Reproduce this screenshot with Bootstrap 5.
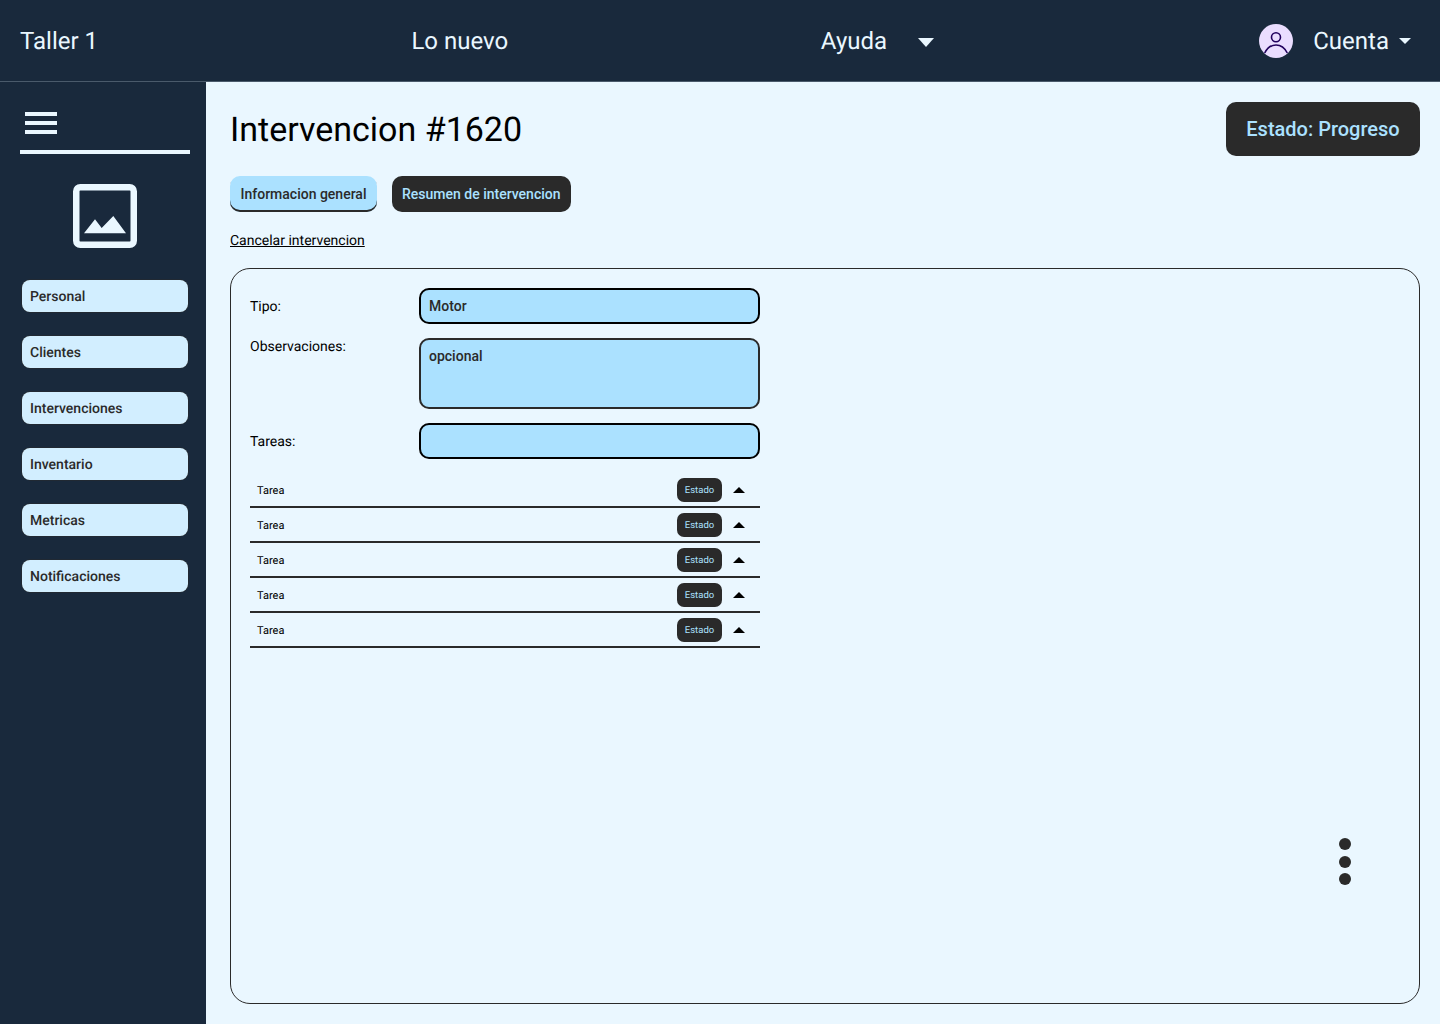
<!DOCTYPE html>
<html lang="es">
<head>
  <meta charset="UTF-8">
  <meta name="viewport" content="width=device-width, initial-scale=1.0">
  <title>Intervencion #1620</title>
  <link href="https://cdn.jsdelivr.net/npm/bootstrap@5.3.1/dist/css/bootstrap.min.css" rel="stylesheet">
  <style>
    body { font-family: Roboto, sans-serif; background: #eaf7ff; color: #000; text-rendering: geometricPrecision; }
    .app-frame { width: 1440px; height: 1024px; overflow: hidden; }

    /* barra superior */
    .top-bar { height: 82px; background: #19293c; border-bottom: 1px solid #4a5a6b; color: #eaf7ff; font-size: 24px; padding: 0 29px 0 20px; }
    .top-brand { width: 391.5px; }
    .top-news { width: 409.5px; }
    .top-help { width: 438px; }
    .caret-big { width: 0; height: 0; border-left: 8.5px solid transparent; border-right: 8.5px solid transparent; border-top: 9px solid #eaf7ff; margin: 3px 0 0 31px; }
    .caret-small { width: 0; height: 0; border-left: 6px solid transparent; border-right: 6px solid transparent; border-top: 6px solid #eaf7ff; margin-left: 10px; }
    .avatar-round { width: 34px; height: 34px; margin: 1px 20.5px 0 0; }

    /* lateral */
    .side-bar { width: 206px; height: 942px; background: #19293c; padding: 30px 16px 0 20px; flex: none; }
    .burger-btn { width: 32px; height: 22px; margin-left: 5px; display: block; }
    .side-rule { height: 4px; background: #eaf7ff; margin-top: 16px; width: 170px; }
    .logo-box { width: 64px; height: 64px; display: block; margin: 30px 0 32px 53px; }
    .side-link { display: block; width: 166px; height: 32px; margin: 0 0 24px 2px; padding: 1px 8px 0; line-height: 32px; background: #d2eeff; box-shadow: 0 0 0 .5px #2a2a2a; border-radius: 8px; color: #2a2a2a; font-size: 14px; font-weight: 500; text-decoration: none; }

    /* contenido */
    .main-area { padding: 20px 20px 20px 24px; width: 1234px; }
    .page-title { font-size: 34px; font-weight: 400; line-height: 52px; padding-top: 2px; margin: 0; color: #000; }
    .status-pill { width: 194px; height: 54px; background: #2a2a2a; color: #abe1ff; font-size: 20px; font-weight: 500; border: 0; border-radius: 10px; padding: 0; }
    .tab-row { margin-top: 20px; gap: 14.5px; }
    .tab-light, .tab-dark { height: 36px; padding: 0 10px; font-size: 14px; font-weight: 500; border-radius: 10px; border: 0; }
    .tab-light { width: 147px; background: #abe1ff; color: #2a2a2a; box-shadow: inset 0 -2px 0 #2a2a2a; }
    .tab-dark { width: 179.5px; background: #2a2a2a; color: #abe1ff; }
    .cancel-link { display: block; width: fit-content; margin-top: 19px; font-size: 14px; line-height: 20px; color: #000; }
    .work-panel { position: relative; height: 736px; margin-top: 17px; border: 1px solid #2a2a2a; border-radius: 20px; padding: 19px; }
    .form-side { width: 510px; display: flex; flex-direction: column; gap: 14px; }
    .field-label { width: 169px; font-size: 14px; line-height: 16px; padding-top: 2px; color: #000; flex: none; }
    .label-top { margin-top: -1px; }
    .field-input { width: 341px; background: #abe1ff; border: 2px solid #000; border-radius: 10px; color: #2a2a2a; font-size: 14px; font-weight: 500; padding: 0 8px; height: 36px; box-shadow: none; }
    .field-input:focus { background: #abe1ff; border-color: #000; box-shadow: none; }
    textarea.field-input { height: 71px; padding-top: 6px; resize: none; border-color: #2a2a2a; }
    .task-row { height: 35px; border-bottom: 2px solid #2a2a2a; padding-left: 7px; font-size: 11px; color: #000; }
    .task-name { padding-top: 3px; }
    .task-badge { width: 45px; height: 24px; line-height: 25px; text-align: center; background: #2a2a2a; color: #abe1ff; font-size: 9.5px; border-radius: 7px; margin: 1px 11px 0 0; }
    .caret-up { width: 0; height: 0; border-left: 6.5px solid transparent; border-right: 6.5px solid transparent; border-bottom: 6px solid #000; margin-right: 15px; }
    .more-dots { position: absolute; left: 1108px; top: 569px; display: flex; flex-direction: column; gap: 5.5px; }
    .more-dots span { width: 12px; height: 12px; border-radius: 50%; background: #2a2a2a; display: block; }
  </style>
</head>
<body>
  <div class="app-frame">
    <nav class="top-bar d-flex align-items-center">
      <div class="top-brand">Taller 1</div>
      <div class="top-news">Lo nuevo</div>
      <div class="top-help d-flex align-items-center">Ayuda<span class="caret-big"></span></div>
      <div class="d-flex align-items-center">
        <svg class="avatar-round" viewBox="0 0 34 34">
          <circle cx="17" cy="17" r="17" fill="#eaddff"/>
          <circle cx="17" cy="13.3" r="4.5" fill="none" stroke="#21005d" stroke-width="1.6"/>
          <path d="M5.700 29c2.500-5 6.500-8 11.300-8s8.800 3 11.300 8" fill="none" stroke="#21005d" stroke-width="1.6"/>
        </svg>
        Cuenta<span class="caret-small"></span>
      </div>
    </nav>

    <div class="d-flex">
      <aside class="side-bar">
        <svg class="burger-btn" viewBox="0 0 32 22"><path d="M0 0h32v4H0zM0 9h32v4H0zM0 18h32v4H0z" fill="#eaf7ff"/></svg>
        <div class="side-rule"></div>
        <svg class="logo-box" viewBox="0 0 64 64">
          <rect x="3.250" y="3.250" width="57.500" height="57.500" rx="4" fill="none" stroke="#eaf7ff" stroke-width="6.500"/>
          <path d="M11 49.300l11-14 6.700 8.700L40.300 32 53 49.300z" fill="#eaf7ff"/>
        </svg>
        <a class="side-link" href="#">Personal</a>
        <a class="side-link" href="#">Clientes</a>
        <a class="side-link" href="#">Intervenciones</a>
        <a class="side-link" href="#">Inventario</a>
        <a class="side-link" href="#">Metricas</a>
        <a class="side-link" href="#">Notificaciones</a>
      </aside>

      <main class="main-area flex-grow-1">
        <div class="d-flex justify-content-between align-items-center">
          <h1 class="page-title">Intervencion #1620</h1>
          <button class="status-pill" type="button">Estado: Progreso</button>
        </div>
        <div class="tab-row d-flex">
          <button class="tab-light" type="button">Informacion general</button>
          <button class="tab-dark" type="button">Resumen de intervencion</button>
        </div>
        <a class="cancel-link" href="#">Cancelar intervencion</a>

        <section class="work-panel">
          <div class="form-side">
            <div class="d-flex align-items-center">
              <label class="field-label">Tipo:</label>
              <input class="form-control field-input" type="text" value="Motor">
            </div>
            <div class="d-flex">
              <label class="field-label label-top">Observaciones:</label>
              <textarea class="form-control field-input">opcional</textarea>
            </div>
            <div class="d-flex align-items-center">
              <label class="field-label">Tareas:</label>
              <input class="form-control field-input" type="text">
            </div>
            <div id="task-list"></div>
          </div>
          <div class="more-dots"><span></span><span></span><span></span></div>
        </section>
      </main>
    </div>
  </div>

  <script src="https://cdn.jsdelivr.net/npm/bootstrap@5.3.1/dist/js/bootstrap.bundle.min.js"></script>
  <script>
    const taskList = document.getElementById("task-list");
    for (let i = 0; i < 5; i++) {
      const row = document.createElement("div");
      row.className = "task-row d-flex align-items-center";
      row.innerHTML = `
        <span class="task-name flex-grow-1">Tarea</span>
        <span class="task-badge">Estado</span>
        <span class="caret-up"></span>
      `;
      taskList.appendChild(row);
    }
  </script>
</body>
</html>
